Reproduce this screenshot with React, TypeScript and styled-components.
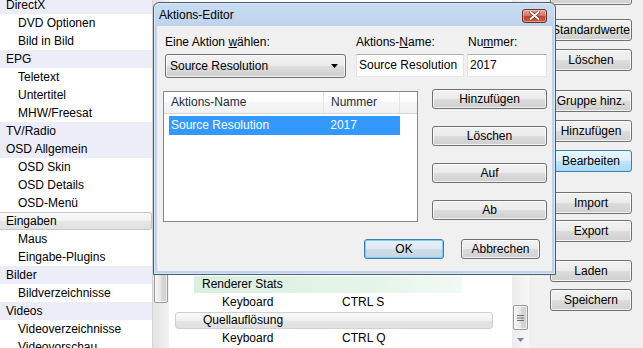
import React from 'react';
import styled, { createGlobalStyle, css } from 'styled-components';

const GlobalStyle = createGlobalStyle`
  html, body {
    margin: 0;
    padding: 0;
  }
  body {
    font-family: "Liberation Sans", Arial, sans-serif;
    font-size: 12px;
    color: #000;
    background: #f0f0f0;
  }
`;

type TreeKind = 'cat' | 'item' | 'group';

const treeItems: { label: string; kind: TreeKind }[] = [
  { label: 'DirectX', kind: 'cat' },
  { label: 'DVD Optionen', kind: 'item' },
  { label: 'Bild in Bild', kind: 'item' },
  { label: 'EPG', kind: 'cat' },
  { label: 'Teletext', kind: 'item' },
  { label: 'Untertitel', kind: 'item' },
  { label: 'MHW/Freesat', kind: 'item' },
  { label: 'TV/Radio', kind: 'cat' },
  { label: 'OSD Allgemein', kind: 'cat' },
  { label: 'OSD Skin', kind: 'item' },
  { label: 'OSD Details', kind: 'item' },
  { label: 'OSD-Menü', kind: 'item' },
  { label: 'Eingaben', kind: 'group' },
  { label: 'Maus', kind: 'item' },
  { label: 'Eingabe-Plugins', kind: 'item' },
  { label: 'Bilder', kind: 'cat' },
  { label: 'Bildverzeichnisse', kind: 'item' },
  { label: 'Videos', kind: 'cat' },
  { label: 'Videoverzeichnisse', kind: 'item' },
  { label: 'Videovorschau', kind: 'item' },
];

const sideButtons = [
  { label: 'Lernen An', mt: -17 },
  { label: 'Standardwerte', mt: 14 },
  { label: 'Löschen', mt: 8 },
  { label: 'Gruppe hinz.', mt: 19 },
  { label: 'Hinzufügen', mt: 8 },
  { label: 'Bearbeiten', mt: 8, focus: true },
  { label: 'Import', mt: 20 },
  { label: 'Export', mt: 6 },
  { label: 'Laden', mt: 18 },
  { label: 'Speichern', mt: 7 },
];

function Grip() {
  return (
    <svg width="7" height="8" viewBox="0 0 7 8">
      <path d="M0 1.5h7M0 4h7M0 6.5h7" stroke="#6d6d6d" strokeWidth="1" />
    </svg>
  );
}

function CloseGlyph() {
  return (
    <svg width="11" height="9" viewBox="0 0 11 9">
      <path d="M1.5 1l8 7M9.5 1l-8 7" stroke="#6b2a20" strokeWidth="3.4" strokeLinecap="round" />
      <path d="M1.5 1l8 7M9.5 1l-8 7" stroke="#fff" strokeWidth="2" strokeLinecap="round" />
    </svg>
  );
}

function App() {
  return (
    <>
      <GlobalStyle />
      <Screen>
        <Tree>
          <TreeInner>
            {treeItems.map((t) => (
              <TreeRow key={t.label} $kind={t.kind}>
                {t.label}
              </TreeRow>
            ))}
          </TreeInner>
        </Tree>
        <VScroll>
          <Thumb $top={140} $height={163} />
        </VScroll>

        <Middle>
          <BindList>
            <BindRow>
              <SubGroup>Renderer Stats</SubGroup>
            </BindRow>
            <BindRow>
              <KeyCell>Keyboard</KeyCell>
              <KeyCell>CTRL S</KeyCell>
            </BindRow>
            <BindRow>
              <GroupBar>Quellauflösung</GroupBar>
            </BindRow>
            <BindRow>
              <KeyCell>Keyboard</KeyCell>
              <KeyCell>CTRL Q</KeyCell>
            </BindRow>
          </BindList>
          <MidScroll>
            <Thumb $top={0} $height={25}>
              <Grip />
            </Thumb>
            <ArrowBox>
              <svg width="7" height="4" viewBox="0 0 7 4">
                <path d="M0 0h7L3.5 4z" fill="#7a869a" />
              </svg>
            </ArrowBox>
          </MidScroll>
        </Middle>

        <SideColumn>
          {sideButtons.map((b) => (
            <SideButton key={b.label} $mt={b.mt} $variant={b.focus ? 'focus' : 'normal'}>
              {b.label}
            </SideButton>
          ))}
        </SideColumn>

        <Dialog>
          <TitleBar>
            <Title>Aktions-Editor</Title>
            <CloseButton aria-label="Schließen">
              <CloseGlyph />
            </CloseButton>
          </TitleBar>
          <Client>
            <FieldsRow>
              <Field $w={181} $ml={0}>
                <FieldLabel>
                  Eine Aktion <u>w</u>ählen:
                </FieldLabel>
                <Combo>
                  <span>Source Resolution</span>
                  <svg width="7" height="4" viewBox="0 0 7 4">
                    <path d="M0 0h7L3.5 4z" fill="#000" />
                  </svg>
                </Combo>
              </Field>
              <Field $w={108} $ml={10}>
                <FieldLabel>
                  Aktions-<u>N</u>ame:
                </FieldLabel>
                <TextInput>Source Resolution</TextInput>
              </Field>
              <Field $w={80} $ml={3}>
                <FieldLabel $indent={1}>
                  Nu<u>m</u>mer:
                </FieldLabel>
                <TextInput>2017</TextInput>
              </Field>
            </FieldsRow>

            <MiddleRow>
              <ListView>
                <ListHeader>
                  <HeaderCell $w={160}>Aktions-Name</HeaderCell>
                  <HeaderCell $w={76}>Nummer</HeaderCell>
                  <HeaderCell $w={0} />
                </ListHeader>
                <ListRow $selected>
                  <RowCell $w={160}>Source Resolution</RowCell>
                  <RowCell $w={71}>2017</RowCell>
                </ListRow>
              </ListView>
              <ActionButtons>
                <DlgButton $w={115}>Hinzufügen</DlgButton>
                <DlgButton $w={115}>Löschen</DlgButton>
                <DlgButton $w={115}>Auf</DlgButton>
                <DlgButton $w={115}>Ab</DlgButton>
              </ActionButtons>
            </MiddleRow>

            <Footer>
              <DlgButton $w={80} $variant="default">OK</DlgButton>
              <DlgButton $w={79}>Abbrechen</DlgButton>
            </Footer>
          </Client>
        </Dialog>
      </Screen>
    </>
  );
}

export default App;

const Screen = styled.div`
  position: relative;
  width: 643px;
  height: 348px;
  overflow: hidden;
  display: flex;
  background: #f0f0f0;
`;

/* ---------- settings tree ---------- */

const Tree = styled.div`
  width: 152px;
  height: 100%;
  overflow: hidden;
  background: #fff;
`;

const TreeInner = styled.div`
  margin-top: -4px;
  display: flex;
  flex-direction: column;
`;

const TreeRow = styled.div<{ $kind: TreeKind }>`
  height: 18px;
  line-height: 18px;
  box-sizing: border-box;
  white-space: nowrap;
  padding-left: ${(p) => (p.$kind === 'item' ? '18px' : '6px')};
  background: ${(p) => (p.$kind === 'cat' ? '#ededf9' : '#fff')};

  ${(p) =>
    p.$kind === 'group' &&
    css`
      line-height: 16px;
      border: 1px solid #c6c6c6;
      border-left: none;
      border-radius: 0 3px 3px 0;
      background: linear-gradient(#fbfbfb, #f1f1f1 50%, #e6e6e6 50%, #e1e1e1);
    `}
`;

/* ---------- scrollbars ---------- */

const VScroll = styled.div`
  width: 17px;
  height: 100%;
  box-sizing: border-box;
  border-left: 1px solid #d4d4d4;
  background: linear-gradient(to right, #e3e3e3, #f2f2f2);
  display: flex;
  flex-direction: column;
`;

const Thumb = styled.div<{ $top: number; $height: number }>`
  margin: ${(p) => p.$top}px 1px 0 1px;
  height: ${(p) => p.$height}px;
  box-sizing: border-box;
  border: 1px solid #9a9a9a;
  border-radius: 2px;
  background: linear-gradient(to right, #f4f4f4, #e7e7e7 50%, #d8d8d8 51%, #d0d0d0);
  box-shadow: inset 0 0 0 1px rgba(255, 255, 255, 0.6);
  display: flex;
  align-items: center;
  justify-content: center;
`;

const MidScroll = styled.div`
  width: 17px;
  height: 100%;
  box-sizing: border-box;
  background: linear-gradient(to right, #ececec, #f7f7f7);
  display: flex;
  flex-direction: column;
  justify-content: flex-end;
`;

const ArrowBox = styled.div`
  height: 17px;
  margin-top: 1px;
  display: flex;
  align-items: center;
  justify-content: center;
`;

/* ---------- key binding list ---------- */

const Middle = styled.div`
  width: 360px;
  height: 100%;
  display: flex;
  background: #fff;
`;

const BindList = styled.div`
  flex: 1;
  display: flex;
  flex-direction: column;
  justify-content: flex-end;
  padding-bottom: 1px;
`;

const BindRow = styled.div`
  height: 18px;
  display: flex;
  align-items: center;
  white-space: nowrap;
`;

const SubGroup = styled.div`
  margin-left: 25px;
  width: 268px;
  height: 17px;
  line-height: 17px;
  padding-left: 8px;
  box-sizing: border-box;
  background: linear-gradient(to right, #d9efe1, #e6f5eb 70%, #f1faf4);
`;

const GroupBar = styled.div`
  margin-left: 6px;
  width: 318px;
  height: 17px;
  line-height: 15px;
  padding-left: 27px;
  box-sizing: border-box;
  border: 1px solid #d0d0d0;
  border-radius: 3px;
  background: linear-gradient(#fafafa, #f0f0f0 50%, #e5e5e5 50%, #dfdfdf);
`;

const KeyCell = styled.div`
  width: 120px;
  &:first-child {
    margin-left: 53px;
  }
`;

/* ---------- right button column ---------- */

const SideColumn = styled.div`
  width: 82px;
  margin-left: 21px;
  display: flex;
  flex-direction: column;
`;

type Variant = 'normal' | 'default' | 'focus';

const buttonSkin = (v: Variant) => {
  if (v === 'focus') {
    return css`
      border-color: #3c7fb1;
      background: linear-gradient(#eaf6fd, #d9f0fc 50%, #bee6fd 50%, #a7d9f5);
    `;
  }
  if (v === 'default') {
    return css`
      border-color: #3c7fb1;
      background: linear-gradient(#e9f1f7, #dfe9f1 50%, #d0dde8 50%, #c6d6e3);
      box-shadow: inset 0 0 0 1px #7fc8ef;
    `;
  }
  return css`
    border-color: #707070;
    background: linear-gradient(#f2f2f2, #ebebeb 50%, #dddddd 50%, #cfcfcf);
    box-shadow: inset 0 0 0 1px rgba(255, 255, 255, 0.75);
  `;
};

const SideButton = styled.button<{ $mt: number; $variant: Variant }>`
  margin-top: ${(p) => p.$mt}px;
  height: 22px;
  width: 100%;
  padding: 0;
  font: inherit;
  color: #000;
  border: 1px solid;
  border-radius: 3px;
  white-space: nowrap;
  ${(p) => buttonSkin(p.$variant)}
`;

/* ---------- dialog window ---------- */

const Dialog = styled.div`
  position: absolute;
  left: 153px;
  top: 2px;
  width: 403px;
  height: 273px;
  box-sizing: border-box;
  border: 1px solid #4a5a6c;
  border-radius: 6px 6px 0 0;
  padding: 0 3px 3px;
  background: linear-gradient(#c8dbf0, #bcd3ec 30px);
  box-shadow: inset 0 0 0 1px rgba(255, 255, 255, 0.45);
  display: flex;
  flex-direction: column;
`;

const TitleBar = styled.div`
  height: 23px;
  display: flex;
  align-items: center;
  justify-content: space-between;
  padding: 0 5px 0 2px;
`;

const Title = styled.div`
  font-size: 12px;
  color: #000;
`;

const CloseButton = styled.button`
  width: 25px;
  height: 14px;
  margin-top: 2px;
  padding: 0;
  border: 1px solid #6e3328;
  border-radius: 3px;
  background: linear-gradient(#e6a89c, #d47a68 45%, #c1432c 50%, #c8604a);
  box-shadow: inset 0 0 0 1px rgba(255, 220, 210, 0.45);
  display: flex;
  align-items: center;
  justify-content: center;
`;

const Client = styled.div`
  flex: 1;
  background: #f0f0f0;
  padding: 9px 0 0 6px;
  display: flex;
  flex-direction: column;
`;

const FieldsRow = styled.div`
  display: flex;
  margin-left: 2px;
`;

const Field = styled.div<{ $w: number; $ml: number }>`
  width: ${(p) => p.$w}px;
  margin-left: ${(p) => p.$ml}px;
  display: flex;
  flex-direction: column;
`;

const FieldLabel = styled.div<{ $indent?: number }>`
  height: 15px;
  line-height: 15px;
  margin-bottom: 4px;
  padding-left: ${(p) => p.$indent ?? 0}px;
  white-space: nowrap;
`;

const Combo = styled.div`
  height: 24px;
  box-sizing: border-box;
  border: 1px solid #707070;
  border-radius: 3px;
  padding: 0 7px 0 4px;
  background: linear-gradient(#f2f2f2, #ebebeb 50%, #dddddd 50%, #cfcfcf);
  box-shadow: inset 0 0 0 1px rgba(255, 255, 255, 0.7);
  display: flex;
  align-items: center;
  justify-content: space-between;
`;

const TextInput = styled.div`
  height: 23px;
  line-height: 21px;
  box-sizing: border-box;
  padding-left: 2px;
  background: #fff;
  border: 1px solid #e2e3ea;
  border-top-color: #abadb3;
  border-bottom-color: #e3e9ef;
  white-space: nowrap;
  overflow: hidden;
`;

const MiddleRow = styled.div`
  display: flex;
  align-items: flex-start;
  margin-top: 11px;
`;

const ListView = styled.div`
  margin-top: 2px;
  width: 255px;
  height: 131px;
  box-sizing: border-box;
  border: 1px solid #828790;
  background: #fff;
`;

const ListHeader = styled.div`
  display: flex;
  height: 22px;
  box-sizing: border-box;
  border-bottom: 1px solid #d5d5d5;
  background: linear-gradient(#ffffff, #ffffff 50%, #f4f5f7 50%, #f1f2f4);
`;

const HeaderCell = styled.div<{ $w: number }>`
  ${(p) => (p.$w ? `width: ${p.$w}px;` : 'flex: 1;')}
  box-sizing: border-box;
  padding-left: 7px;
  line-height: 21px;
  color: #1e2a3a;
  border-right: ${(p) => (p.$w ? '1px solid #e3e4e6' : 'none')};
`;

const ListRow = styled.div<{ $selected?: boolean }>`
  display: flex;
  height: 19px;
  line-height: 19px;
  margin: 2px 0 0 5px;
  width: 231px;
  background: ${(p) => (p.$selected ? '#3399ff' : 'transparent')};
  color: ${(p) => (p.$selected ? '#fff' : '#000')};
`;

const RowCell = styled.div<{ $w: number }>`
  width: ${(p) => p.$w}px;
  padding-left: 2px;
  white-space: nowrap;
`;

const ActionButtons = styled.div`
  margin-left: 14px;
  display: flex;
  flex-direction: column;
  gap: 17px;
`;

const DlgButton = styled.button<{ $w: number; $variant?: Variant }>`
  width: ${(p) => p.$w}px;
  height: 20px;
  padding: 0;
  font: inherit;
  color: #000;
  border: 1px solid;
  border-radius: 3px;
  ${(p) => buttonSkin(p.$variant ?? 'normal')}
`;

const Footer = styled.div`
  display: flex;
  justify-content: flex-end;
  gap: 17px;
  margin-top: 17px;
  padding-right: 12px;
`;
